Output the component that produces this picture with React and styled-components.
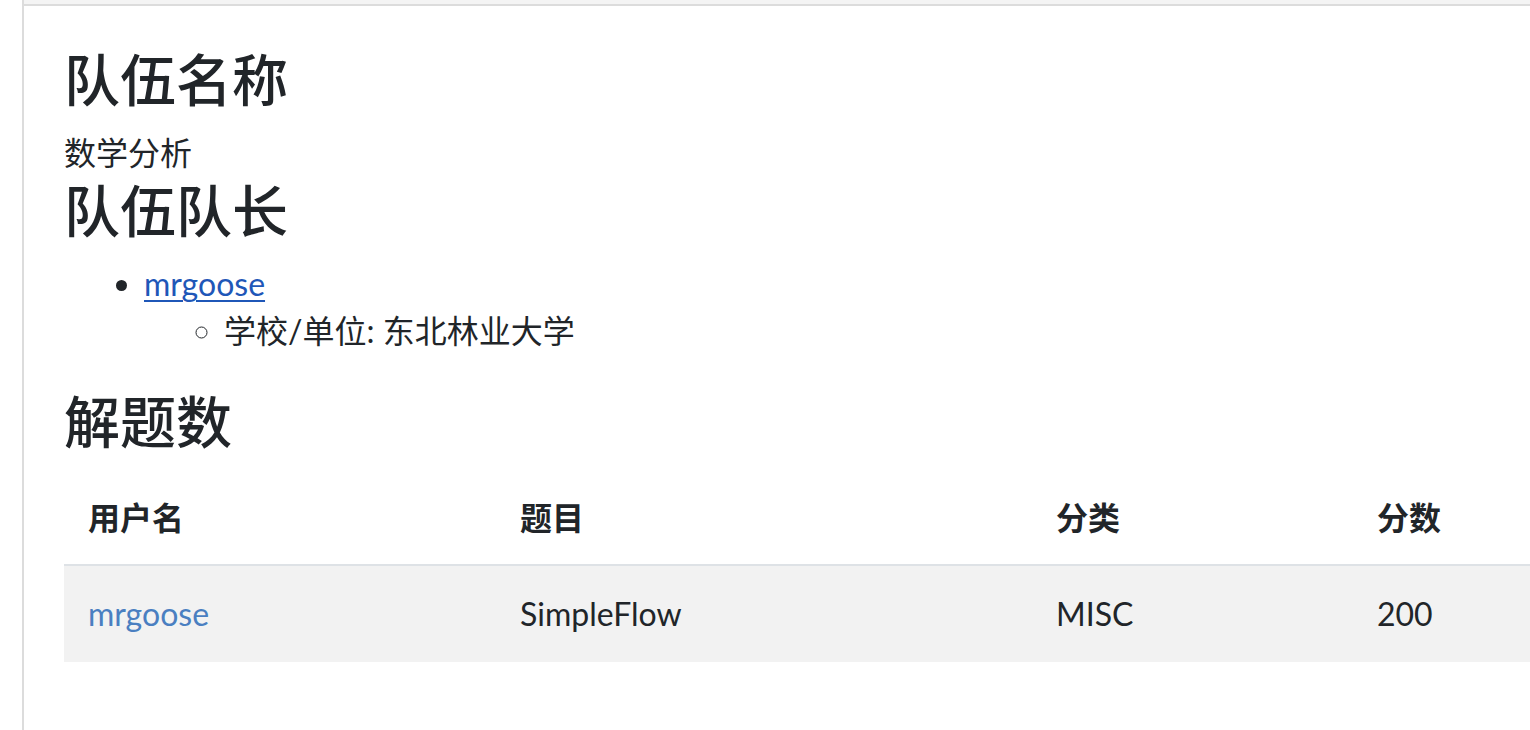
import { createGlobalStyle } from "styled-components";
import styled from "styled-components";

const GlobalStyle = createGlobalStyle`
  html, body {
    margin: 0;
    padding: 0;
    background: #fff;
  }
  body {
    font-family: "Lato", "Noto Sans CJK SC", sans-serif;
    font-size: 32px;
    line-height: 1.5;
    color: #212529;
    overflow: hidden;
  }
`;

const solves = [
  { user: "mrgoose", challenge: "SimpleFlow", category: "MISC", value: 200 },
];

function App() {
  return (
    <Page>
      <GlobalStyle />
      <Gutter />
      <Panel>
        <TopStrip />
        <Content>
          <Heading>队伍名称</Heading>
          <Text>数学分析</Text>
          <Heading>队伍队长</Heading>
          <List>
            <li>
              <CaptainLink href="#">mrgoose</CaptainLink>
              <SubList>
                <li>学校/单位: 东北林业大学</li>
              </SubList>
            </li>
          </List>
          <Heading>解题数</Heading>
          <Table>
            <colgroup>
              <col style={{ width: 432 }} />
              <col style={{ width: 536 }} />
              <col style={{ width: 321 }} />
              <col style={{ width: 211 }} />
            </colgroup>
            <thead>
              <tr>
                <Th>用户名</Th>
                <Th>题目</Th>
                <Th>分类</Th>
                <Th>分数</Th>
              </tr>
            </thead>
            <tbody>
              {solves.map((s) => (
                <Row key={s.challenge}>
                  <Td>
                    <UserLink href="#">{s.user}</UserLink>
                  </Td>
                  <Td>{s.challenge}</Td>
                  <Td>{s.category}</Td>
                  <Td>{s.value}</Td>
                </Row>
              ))}
            </tbody>
          </Table>
        </Content>
      </Panel>
    </Page>
  );
}

export default App;

/* --- styled-components --- */

const Page = styled.div`
  display: flex;
  min-height: 730px;
  width: 1530px;
`;

const Gutter = styled.div`
  width: 22px;
  flex-shrink: 0;
  background: #fff;
`;

const Panel = styled.div`
  flex: 1;
  min-width: 0;
  border-left: 2px solid #dcdcdc;
  display: flex;
  flex-direction: column;
`;

const TopStrip = styled.div`
  height: 4px;
  background: #f4f4f4;
  border-bottom: 2px solid #dcdcdc;
`;

const Content = styled.div`
  padding: 40px 0 0 40px;
`;

const Heading = styled.h3`
  font-size: 56px;
  font-weight: 500;
  line-height: 1.2;
  margin: 0 0 16px;
  color: #212529;
`;

const Text = styled.p`
  margin: 0;
`;

const List = styled.ul`
  margin: 0 0 34px;
  padding-left: 80px;
  list-style: disc;
  line-height: 47px;
`;

const SubList = styled.ul`
  margin: 0;
  padding-left: 80px;
  list-style: circle;
`;

const CaptainLink = styled.a`
  color: #1f57b8;
  text-decoration: underline;
  text-underline-offset: 4px;
  text-decoration-thickness: 2px;
`;

const Table = styled.table`
  width: 1500px;
  table-layout: fixed;
  border-collapse: collapse;
`;

const Th = styled.th`
  text-align: left;
  font-weight: 700;
  padding: 22px 24px 22px;
  border-bottom: 2px solid #dee2e6;
`;

const Row = styled.tr`
  background: #f2f2f2;
`;

const Td = styled.td`
  padding: 24px;
`;

const UserLink = styled.a`
  color: #4a7fc1;
  text-decoration: none;
`;
